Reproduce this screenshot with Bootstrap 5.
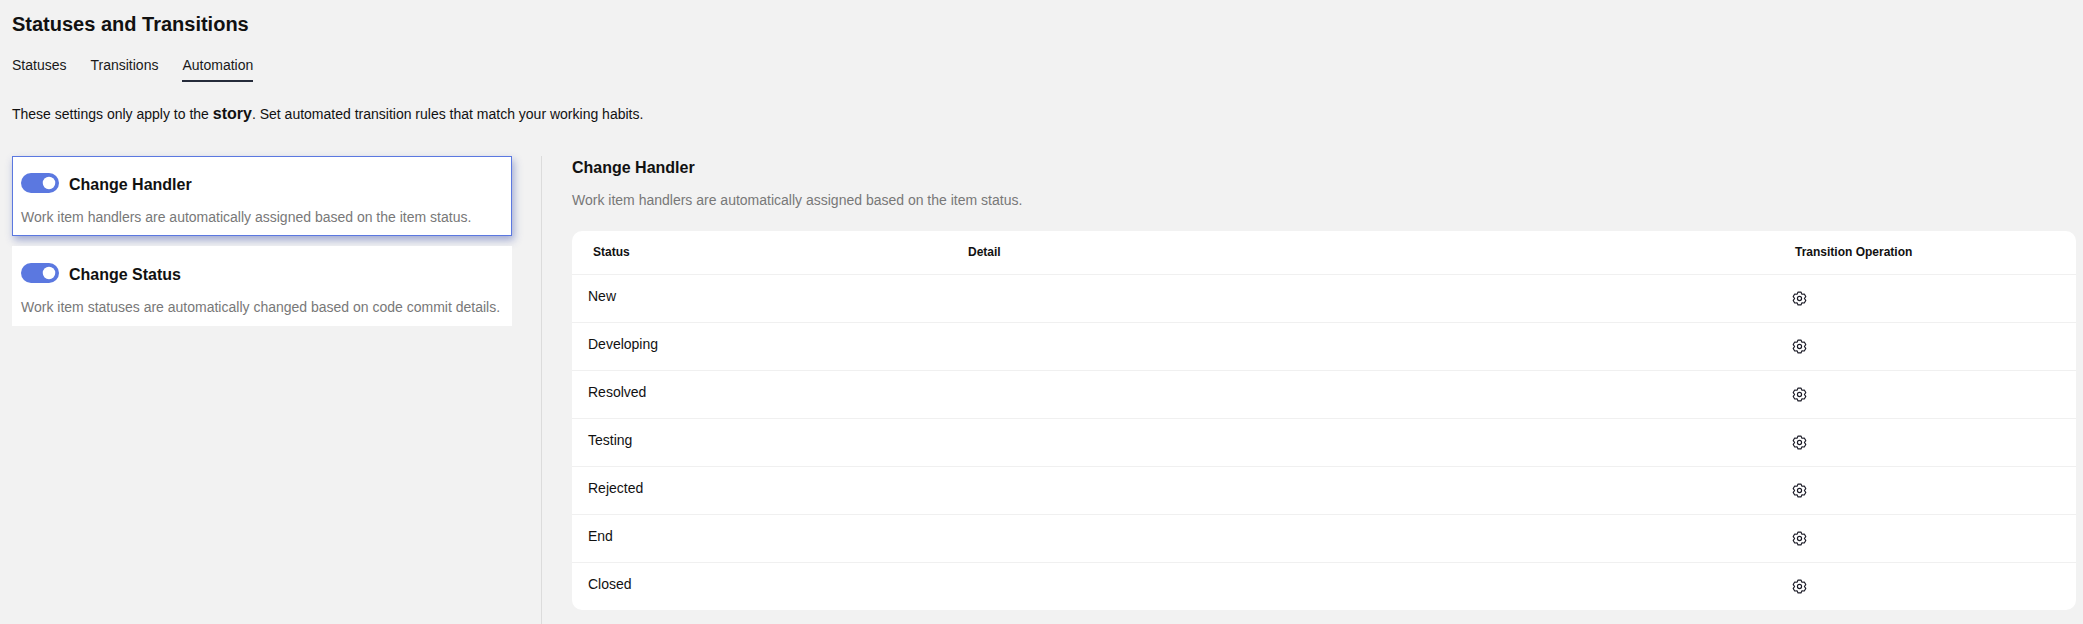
<!DOCTYPE html>
<html lang="en">
<head>
<meta charset="utf-8">
<title>Statuses and Transitions</title>
<link href="https://cdn.jsdelivr.net/npm/bootstrap@5.3.0/dist/css/bootstrap.min.css" rel="stylesheet">
<style>
html,body{height:624px;overflow:hidden}
body{background:#f2f2f2;color:#111;font-family:"Liberation Sans",Arial,sans-serif;font-size:14px;line-height:20px}
.page-title{font-size:20px;line-height:28px;font-weight:700;margin:0;padding:10px 0 0 12px;color:#111}
.tabbar{padding:0 0 0 12px;margin-top:17px;gap:24px}
.tabbar .nav-link{padding:0 0 5px;color:#191919;font-size:14px;line-height:20px;border-bottom:2px solid transparent}
.tabbar .nav-link.active{border-bottom-color:#252b3a}
.intro{margin:22px 0 0 12px;line-height:20px;height:20px}
.intro b{font-size:16px}
.panes{margin-top:32px;height:468px}
.rule-list{width:500px;margin-left:12px;gap:10px;flex:none}
.rule-item{height:80px;background:#fff;padding:16px 8px 0 8px;border:1px solid transparent}
.rule-item.on{border-color:#5b78e0;box-shadow:2px 4px 8px rgba(60,80,170,.45)}
.rule-item .form-check-input{width:38px;height:20px;margin:0;float:none;border:0;background-color:#5b78e0;background-image:url("data:image/svg+xml,%3csvg xmlns='http://www.w3.org/2000/svg' viewBox='-4 -4 8 8'%3e%3ccircle r='2.5' fill='%23fff'/%3e%3c/svg%3e")}
.switch-row{gap:10px}
.rule-name{font-size:16px;font-weight:700;line-height:20px}
.rule-note{margin:10px 0 0;color:#787878;font-size:14px;line-height:20px;white-space:nowrap}
.pane-rule{width:1px;background:#dcdcdc;margin-left:29px;flex:none}
.detail-pane{margin-left:30px;width:1504px;flex:none}
.detail-title{font-size:16px;font-weight:700;line-height:20px;margin:2px 0 0}
.detail-note{margin:12px 0 0;color:#787878;line-height:20px}
.table-box{margin-top:21px;background:#fff;border-radius:10px;overflow:hidden}
.table-box .table{table-layout:fixed;margin:0;background:transparent;--bs-table-bg:transparent;--bs-table-color:#111}
.table-box th{height:43px;padding:0 0 0 16px;font-size:12px;font-weight:700;vertical-align:middle;border-bottom:1px solid #f0f0f0;line-height:16px}
.table-box th:first-child{padding-left:21px}
.table-box td{height:48px;padding:11px 0 0 16px;vertical-align:top;border-bottom:1px solid #f0f0f0;line-height:20px}
.table-box tr:last-child td{border-bottom:0}
.table-box td.op{padding:15px 0 0 13px}
.gear{display:block;width:15px;height:15px;margin-top:1px;color:#1c1c28}
</style>
</head>
<body>
<svg class="d-none"><symbol id="gear" viewBox="0 0 16 16"><path fill="none" stroke="currentColor" stroke-width="1.25" stroke-linejoin="round" d="M14.69 5.95 13.12 3.23 10.6 3.5 9.57 1.18H6.43L5.4 3.5 2.88 3.23 1.31 5.95 2.8 8 1.31 10.05 2.88 12.77 5.4 12.5 6.43 14.82H9.57L10.6 12.5 13.12 12.77 14.69 10.05 13.2 8Z"/><circle cx="8" cy="8" r="2.2" fill="none" stroke="currentColor" stroke-width="1.25"/></symbol></svg>

<h1 class="page-title">Statuses and Transitions</h1>
<nav class="nav tabbar">
  <a class="nav-link" href="#">Statuses</a>
  <a class="nav-link" href="#">Transitions</a>
  <a class="nav-link active" href="#">Automation</a>
</nav>
<p class="intro">These settings only apply to the <b>story</b>. Set automated transition rules that match your working habits.</p>

<div class="d-flex panes">
  <div class="d-flex flex-column rule-list">
    <div class="rule-item on">
      <div class="d-flex align-items-center switch-row">
        <div class="form-check form-switch p-0 m-0 d-flex"><input class="form-check-input" type="checkbox" role="switch" checked aria-label="Change Handler"></div>
        <span class="rule-name">Change Handler</span>
      </div>
      <p class="rule-note">Work item handlers are automatically assigned based on the item status.</p>
    </div>
    <div class="rule-item">
      <div class="d-flex align-items-center switch-row">
        <div class="form-check form-switch p-0 m-0 d-flex"><input class="form-check-input" type="checkbox" role="switch" checked aria-label="Change Status"></div>
        <span class="rule-name">Change Status</span>
      </div>
      <p class="rule-note">Work item statuses are automatically changed based on code commit details.</p>
    </div>
  </div>
  <div class="pane-rule"></div>
  <div class="detail-pane">
    <h2 class="detail-title">Change Handler</h2>
    <p class="detail-note">Work item handlers are automatically assigned based on the item status.</p>
    <div class="table-box">
      <table class="table">
        <colgroup><col style="width:380px"><col style="width:827px"><col></colgroup>
        <thead><tr><th>Status</th><th>Detail</th><th>Transition Operation</th></tr></thead>
        <tbody>
          <tr><td>New</td><td></td><td class="op"><svg class="gear"><use href="#gear"/></svg></td></tr>
          <tr><td>Developing</td><td></td><td class="op"><svg class="gear"><use href="#gear"/></svg></td></tr>
          <tr><td>Resolved</td><td></td><td class="op"><svg class="gear"><use href="#gear"/></svg></td></tr>
          <tr><td>Testing</td><td></td><td class="op"><svg class="gear"><use href="#gear"/></svg></td></tr>
          <tr><td>Rejected</td><td></td><td class="op"><svg class="gear"><use href="#gear"/></svg></td></tr>
          <tr><td>End</td><td></td><td class="op"><svg class="gear"><use href="#gear"/></svg></td></tr>
          <tr><td>Closed</td><td></td><td class="op"><svg class="gear"><use href="#gear"/></svg></td></tr>
        </tbody>
      </table>
    </div>
  </div>
</div>
<script src="https://cdn.jsdelivr.net/npm/bootstrap@5.3.0/dist/js/bootstrap.bundle.min.js"></script>
</body>
</html>
